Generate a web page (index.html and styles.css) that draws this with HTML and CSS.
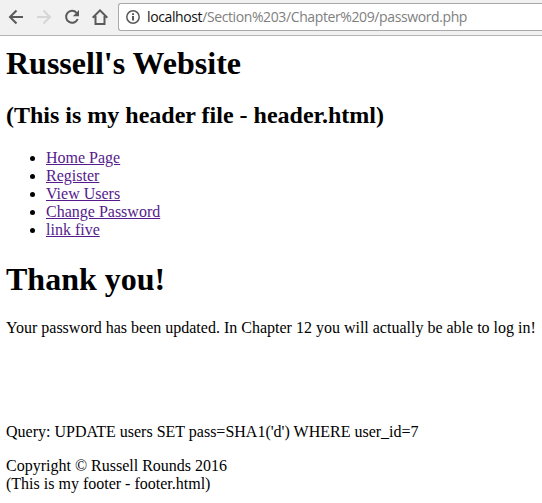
FILE: index.html
```html
<!DOCTYPE html>
<html lang="en">
<head>
<meta charset="utf-8">
<title>Russell's Website</title>
<link rel="stylesheet" href="styles.css">
</head>
<body>
<div class="toolbar">
  <svg class="icon" viewBox="0 0 16 16"><path d="M15 8H2.5M8.5 1.5L2 8L8.5 14.5"/></svg>
  <svg class="icon muted" viewBox="0 0 16 16"><path d="M1 8H13.5M7.5 1.5L14 8L7.5 14.5"/></svg>
  <svg class="icon" viewBox="0 0 16 16"><path d="M12.6 3.8A6 6 0 1 0 13.7 10"/><path class="solid" d="M15 1V7.2H8.8Z"/></svg>
  <svg class="icon" viewBox="0 0 16 16"><path d="M0.7 8.7L8 1.4L15.3 8.7M3.5 7V15H12.5V7"/></svg>
  <div class="address">
    <svg class="info" viewBox="0 0 14 14"><circle cx="7" cy="7" r="6.2"/><path class="mark" d="M7 6V10.6M7 3.2V5"/></svg>
    <span class="url"><span class="host">localhost</span>/Section%203/Chapter%209/password.php</span>
  </div>
</div>
<main>
  <h1>Russell's Website</h1>
  <h2>(This is my header file - header.html)</h2>
  <ul>
    <li><a href="#">Home Page</a></li>
    <li><a href="#">Register</a></li>
    <li><a href="#">View Users</a></li>
    <li><a href="#">Change Password</a></li>
    <li><a href="#">link five</a></li>
  </ul>
  <h1 class="thanks">Thank you!</h1>
  <p class="message">Your password has been updated. In Chapter 12 you will actually be able to log in!</p>
  <p class="query">Query: UPDATE users SET pass=SHA1('d') WHERE user_id=7</p>
  <p>Copyright © Russell Rounds 2016<br>(This is my footer - footer.html)</p>
</main>
</body>
</html>
```
FILE: styles.css
```css
body { margin: 0; background: #fff; color: #000; font: 16px/18px "Liberation Serif", serif; overflow: hidden; }
.toolbar { box-sizing: border-box; height: 36px; padding: 3px 0 4px 8px; display: flex; align-items: center; gap: 12px; background: #f1f1f1; border-bottom: 1px solid #b6b4b6; }
.icon { width: 16px; height: 16px; flex: none; fill: none; stroke: #5a5a5a; stroke-width: 2; }
.muted { stroke: #d6d6d6; }
.solid { fill: #5a5a5a; stroke: none; }
.address { box-sizing: border-box; flex: 1; height: 28px; margin-left: -2px; padding-left: 7px; display: flex; align-items: center; gap: 7px; background: #fff; border: 1px solid #a9a9a9; border-right: 0; border-radius: 3px 0 0 3px; }
.info { width: 14px; height: 14px; flex: none; fill: none; stroke: #5a5a5a; stroke-width: 1.5; }
.mark { stroke-width: 2; }
.url { font: 14px/18px "Open Sans", sans-serif; letter-spacing: -0.39px; color: #808080; white-space: nowrap; }
.host { color: #111; }
main { padding: 9px 6px 0; white-space: nowrap; }
h1 { margin: 0; font-size: 32px; line-height: 37px; }
h2 { margin: 20px 0 20px; font-size: 24px; line-height: 27px; }
ul { margin: 0; padding-left: 40px; }
a { color: #551a8b; }
.thanks { margin: 22px 0 21px; }
p { margin: 16px 0 0; }
.query { margin-top: 86px; }
```
